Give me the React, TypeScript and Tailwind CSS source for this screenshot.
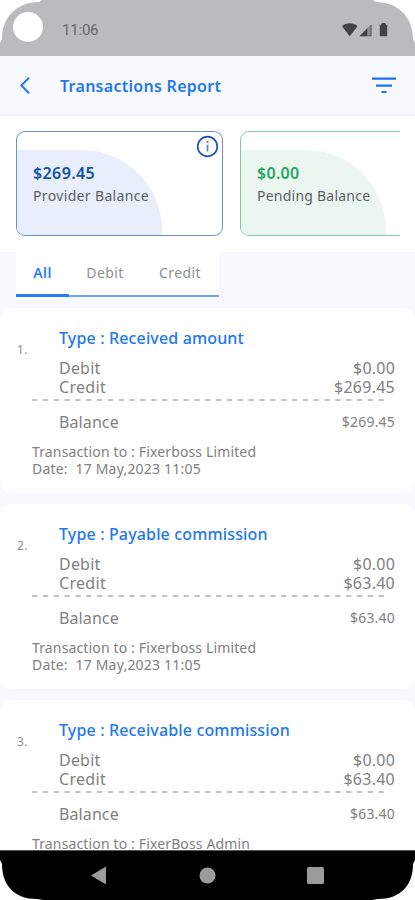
import { useState } from 'react'

type Transaction = {
  id: number
  type: string
  debit: string
  credit: string
  balance: string
  to: string
  date: string
}

const transactions: Transaction[] = [
  { id: 1, type: 'Received amount', debit: '$0.00', credit: '$269.45', balance: '$269.45', to: 'Fixerboss Limited', date: '17 May,2023 11:05' },
  { id: 2, type: 'Payable commission', debit: '$0.00', credit: '$63.40', balance: '$63.40', to: 'Fixerboss Limited', date: '17 May,2023 11:05' },
  { id: 3, type: 'Receivable commission', debit: '$0.00', credit: '$63.40', balance: '$63.40', to: 'FixerBoss Admin', date: '17 May,2023 11:05' },
]

const tabs = [
  { label: 'All', width: 'w-[53px]' },
  { label: 'Debit', width: 'w-[72px]' },
  { label: 'Credit', width: 'w-[78px]' },
]

function StatusBar() {
  return (
    <div className="relative h-14 shrink-0 bg-[#b9bbbc] flex items-center pl-[13px] pr-[26px]">
      {/* screen corners */}
      <svg className="absolute left-0 top-0" width="44" height="44" viewBox="0 0 44 44" fill="#fff">
        <path d="M0 0H42L39 2C17 2 2 17 2 39L0 43Z" />
      </svg>
      <svg className="absolute right-0 top-0 -scale-x-100" width="44" height="44" viewBox="0 0 44 44" fill="#fff">
        <path d="M0 0H42L39 2C17 2 2 17 2 39L0 43Z" />
      </svg>
      <div className="size-[30px] rounded-full bg-white -mt-0.5" />
      <span className="ml-[19px] mt-1 flex-1 font-['Roboto'] text-[15px] tracking-[-0.2px] text-[#66686a]">11:06</span>
      <svg className="mt-[3px]" width="47" height="14" viewBox="0 0 47 14" fill="#414344">
        <path d="M0 3.200C4-.6 11.500-.6 15.500 3.200L7.700 13.200Z" />
        <path d="M29.500 1v12.200H17.300Z" fill="#8b8d8f" />
        <path d="M25.300 5.200v8H17.300Z" />
        <path d="M28.500 2h1v11.200h-3v-1h2z" fill="#5b5d5e" />
        <path d="M40 0h3.200l.6 1.200 1.400 1.200v10.800h-7.400V2.400l1.400-1.200z" />
      </svg>
    </div>
  )
}

function Header() {
  return (
    <header className="h-[60px] shrink-0 bg-[#f7f9fe] border-b-2 border-[#f1f4f9] flex items-center pl-5 pr-[19px]">
      <svg width="10" height="17" viewBox="0 0 10 17" fill="none" stroke="#1f78ee" strokeWidth="2">
        <path d="M9 .8 1.300 8.500 9 16.200" />
      </svg>
      <h1 className="ml-[30px] mt-px flex-1 text-[16px] font-semibold tracking-[0.28px] text-[#1f78ee]">Transactions Report</h1>
      <svg width="24" height="17" viewBox="0 0 24 17" fill="none" stroke="#1f72f2" strokeWidth="2.200">
        <path d="M0 1.600h24M4 8.600h16M9.500 15h5" />
      </svg>
    </header>
  )
}

function Balances() {
  return (
    <section className="h-[136px] shrink-0 bg-white pt-[15px] pl-4 pr-[15px]">
      <div className="flex gap-[17px] overflow-hidden">
        <div className="relative w-[207px] h-[105px] shrink-0 rounded-[9px] border border-[#6d90d3] overflow-hidden">
          <div className="absolute left-0 bottom-0 w-[145px] h-[85px] rounded-tr-[80px] bg-[#e8effa]" />
          <svg className="absolute right-[3px] top-[3px]" width="23" height="23" viewBox="0 0 23 23" fill="none" stroke="#1d55ad">
            <circle cx="11.500" cy="11.500" r="9.800" strokeWidth="1.700" />
            <path d="M11.500 9.800v6.700M11.500 6v2" stroke="#5f87c8" strokeWidth="1.800" />
          </svg>
          <div className="relative pt-[29px] pl-4">
            <p className="text-[16px] leading-[24px] font-semibold tracking-[0.4px] text-[#1550a8]">$269.45</p>
            <p className="text-[14px] leading-[22px] tracking-[0.35px] text-[#5b5f66]">Provider Balance</p>
          </div>
        </div>
        <div className="relative w-[207px] h-[105px] shrink-0 rounded-[9px] border border-[#82c9a5] overflow-hidden">
          <div className="absolute left-0 bottom-0 w-[145px] h-[85px] rounded-tr-[80px] bg-[#ecf6f1]" />
          <div className="relative pt-[29px] pl-4">
            <p className="text-[16px] leading-[24px] font-semibold tracking-[0.3px] text-[#23a863]">$0.00</p>
            <p className="text-[14px] leading-[22px] tracking-[0.23px] text-[#5b5f66]">Pending Balance</p>
          </div>
        </div>
      </div>
    </section>
  )
}

function Tabs() {
  const [active, setActive] = useState('All')

  return (
    <div className="h-14 shrink-0 pl-4">
      <div className="relative w-[203px] h-[45px] bg-white border-b-2 border-[#6ea6f3] flex">
        {tabs.map(t => (
          <button
            key={t.label}
            onClick={() => setActive(t.label)}
            className={`${t.width} h-[45px] pb-px text-[14px] tracking-[0.4px] border-b-[3px] ${
              active === t.label ? 'font-semibold text-[#267ff5] border-[#267ff5]' : 'text-[#8f8f8f] border-transparent'
            }`}
          >
            {t.label}
          </button>
        ))}
      </div>
    </div>
  )
}

function TransactionCard({ t }: { t: Transaction }) {
  return (
    <article className="relative h-[185px] shrink-0 bg-white rounded-xl pt-5 pl-8 pr-5 text-[#808080]">
      <span className="absolute left-[17px] top-[33px] text-[12px] leading-[18px] tracking-[0.4px] text-[#8d9197]">{t.id}.</span>
      <div className="pl-[27px]">
        <h2 className="text-[16px] leading-5 font-medium tracking-[0.15px] text-[#2176f3]">Type : {t.type}</h2>
        <div className="mt-[11px] flex justify-between text-[16px] leading-[19px]">
          <span className="tracking-[0.2px]">Debit</span>
          <span className="tracking-[0.2px]">{t.debit}</span>
        </div>
        <div className="flex justify-between text-[16px] leading-[19px]">
          <span className="tracking-[0.3px]">Credit</span>
          <span className="tracking-[0.25px]">{t.credit}</span>
        </div>
      </div>
      <svg className="block mt-[2px]" width="352" height="2" viewBox="0 0 352 2">
        <path d="M0 1h352" stroke="#b0b0b0" strokeWidth="1.500" strokeDasharray="5.300 5.530" />
      </svg>
      <div className="pl-[27px] mt-[11px] flex items-center justify-between leading-5">
        <span className="text-[16px] tracking-[0.1px]">Balance</span>
        <span className="text-[14px] tracking-[0.2px]">{t.balance}</span>
      </div>
      <div className="mt-[11px] text-[14px] leading-[17px]">
        <p className="tracking-[0.14px]">Transaction to : {t.to}</p>
        <p className="whitespace-pre tracking-[0.2px]">Date:  {t.date}</p>
      </div>
    </article>
  )
}

function NavBar() {
  return (
    <nav className="h-[50px] shrink-0 bg-white">
      <svg className="block" width="415" height="50" viewBox="0 0 415 50" fill="#9b9b9b">
        <path d="M0 0H415V10L413 14C413 36 400 49 378 49L372 50H43L37 49C15 49 2 36 2 14L0 10Z" fill="#000" />
        <path d="M0 .5H415" stroke="#555" />
        <path d="M106 16.500v18L91 25.500Z" />
        <circle cx="207.500" cy="25.500" r="8" />
        <rect x="307" y="17" width="17" height="17" rx="1.500" />
      </svg>
    </nav>
  )
}

export default function App() {
  return (
    <div className="bg-white">
      <div className="w-[415px] h-[900px] flex flex-col overflow-hidden bg-white font-['Noto_Sans',sans-serif]">
        <StatusBar />
        <Header />
        <Balances />
        <div className="flex-1 min-h-0 bg-[#f7f9fe] flex flex-col overflow-hidden">
          <Tabs />
          <div className="flex flex-col gap-[11px]">
            {transactions.map(t => (
              <TransactionCard key={t.id} t={t} />
            ))}
          </div>
        </div>
        <NavBar />
      </div>
    </div>
  )
}
